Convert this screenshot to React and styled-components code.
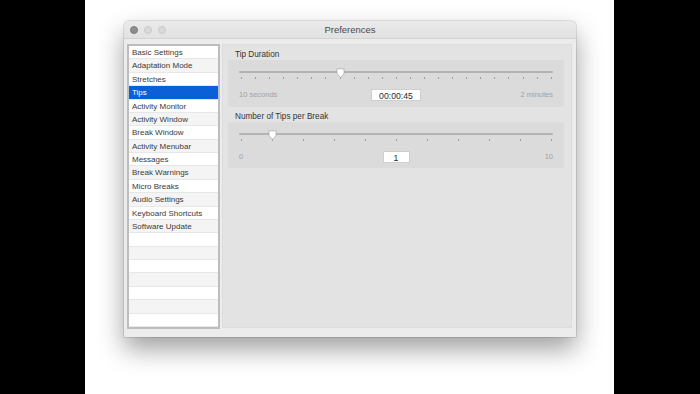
import React from "react";
import styled, { createGlobalStyle } from "styled-components";

const Global = createGlobalStyle`
  html, body {
    margin: 0;
    padding: 0;
    background: #000;
  }
  * {
    box-sizing: border-box;
  }
`;

const Stage = styled.div`
  width: 529px;
  height: 394px;
  margin-left: 85px;
  background: #fff;
  padding: 21px 0 0 39px;
  overflow: hidden;
  font-family: "Liberation Sans", Arial, sans-serif;
`;

const Window = styled.div`
  width: 452px;
  height: 316px;
  background: #ececec;
  border-radius: 5px 5px 1px 1px;
  box-shadow: 0 0 0 1px rgba(0, 0, 0, 0.1), 0 12px 26px rgba(0, 0, 0, 0.38);
  display: flex;
  flex-direction: column;
`;

const TitleBar = styled.div`
  height: 18px;
  display: grid;
  grid-template-columns: 1fr auto 1fr;
  align-items: center;
  background: linear-gradient(#eaeaea, #e2e2e2);
  border-bottom: 1px solid #d2d2d2;
  border-radius: 5px 5px 0 0;
`;

const Lights = styled.div`
  display: flex;
  gap: 6px;
  padding-left: 6px;
`;

const Light = styled.span`
  width: 8px;
  height: 8px;
  border-radius: 50%;
  background: ${(p) => (p.$active ? "#8e8e8e" : "#d9d9d9")};
  border: 0.5px solid ${(p) => (p.$active ? "#7d7d7d" : "#cacaca")};
`;

const Title = styled.div`
  font-size: 9.5px;
  color: #4a4a4a;
`;

const Body = styled.div`
  flex: 1;
  display: flex;
  align-items: flex-start;
  gap: 2px;
  padding: 5px 4px 8px 3px;
`;

const List = styled.div`
  width: 93px;
  height: 285px;
  border: 2px solid #bdbdbd;
  background: #fff;
  display: flex;
  flex-direction: column;
`;

const Row = styled.div`
  height: 13.38px;
  line-height: 13px;
  padding-left: 3px;
  font-size: 8px;
  white-space: nowrap;
  border-bottom: 1px solid #e7e7e7;
  color: ${(p) => (p.$selected ? "#fff" : "#3a3a3a")};
  background: ${(p) =>
    p.$selected ? "#0b5fd7" : p.$odd ? "#f4f4f4" : "#ffffff"};
`;

const Pane = styled.div`
  flex: 1;
  height: 284px;
  background: #e3e3e3;
  border: 1px solid #dddddd;
  padding: 4px 7px 0 5px;
`;

const GroupLabel = styled.div`
  font-size: 8.2px;
  line-height: 11px;
  height: 11px;
  color: #333;
  padding-left: 7px;
  margin-top: ${(p) => (p.$first ? "0" : "4px")};
`;

const SliderBox = styled.div`
  background: #dbdbdb;
  border-radius: 3px;
  padding: 11px 11px ${(p) => p.$bottom}px;
`;

const SliderArea = styled.div`
  position: relative;
`;

const TrackLine = styled.div`
  height: 2px;
  border-radius: 1px;
  background: #b3b3b3;
`;

const Ticks = styled.div`
  display: flex;
  justify-content: space-between;
  margin-top: 4px;
  padding: 0 1px 0 2px;
  height: 2px;
`;

const Tick = styled.span`
  width: 1px;
  height: 2px;
  background: #9c9c9c;
`;

const Thumb = styled.svg`
  position: absolute;
  top: -3px;
  width: 9px;
  height: 10px;
  margin-left: -4.5px;
`;

const LabelRow = styled.div`
  display: flex;
  align-items: center;
  margin-top: 9px;
  height: 13px;
`;

const EdgeLabel = styled.span`
  flex: 1;
  font-size: 7.5px;
  color: #a2a2a2;
  text-align: ${(p) => (p.$right ? "right" : "left")};
`;

const Field = styled.div`
  width: ${(p) => p.$width}px;
  height: 12px;
  line-height: 12px;
  background: #fff;
  border: 0.5px solid #cfcfcf;
  text-align: center;
  font-size: 8.7px;
  color: #2a2a2a;
`;

const items = [
  "Basic Settings",
  "Adaptation Mode",
  "Stretches",
  "Tips",
  "Activity Monitor",
  "Activity Window",
  "Break Window",
  "Activity Menubar",
  "Messages",
  "Break Warnings",
  "Micro Breaks",
  "Audio Settings",
  "Keyboard Shortcuts",
  "Software Update",
];

function Slider({ steps, value, min, max, field, fieldWidth, bottom }) {
  const pct = value / steps;
  return (
    <SliderBox $bottom={bottom}>
      <SliderArea>
        <TrackLine />
        <Ticks>
          {Array.from({ length: steps + 1 }).map((_, i) => (
            <Tick key={i} />
          ))}
        </Ticks>
        <Thumb
          viewBox="0 0 9 10"
          style={{ left: `calc(2.5px + (100% - 4px) * ${pct})` }}
        >
          <path
            d="M1 0.8 H8 V5.8 L4.5 9.2 L1 5.8 Z"
            fill="#fff"
            stroke="#a8a8a8"
            strokeWidth="0.7"
            strokeLinejoin="round"
          />
        </Thumb>
      </SliderArea>
      <LabelRow>
        <EdgeLabel>{min}</EdgeLabel>
        <Field $width={fieldWidth}>{field}</Field>
        <EdgeLabel $right>{max}</EdgeLabel>
      </LabelRow>
    </SliderBox>
  );
}

export default function App() {
  const rows = Array.from({ length: 21 }).map((_, i) => items[i] || "");
  return (
    <Stage>
      <Global />
      <Window>
        <TitleBar>
          <Lights>
            <Light $active />
            <Light />
            <Light />
          </Lights>
          <Title>Preferences</Title>
          <div />
        </TitleBar>
        <Body>
          <List>
            {rows.map((name, i) => (
              <Row key={i} $odd={i % 2 === 1} $selected={name === "Tips"}>
                {name}
              </Row>
            ))}
          </List>
          <Pane>
            <GroupLabel $first>Tip Duration</GroupLabel>
            <Slider
              steps={22}
              value={7}
              min="10 seconds"
              max="2 minutes"
              field="00:00:45"
              fieldWidth={50}
              bottom={6}
            />
            <GroupLabel>Number of Tips per Break</GroupLabel>
            <Slider
              steps={10}
              value={1}
              min="0"
              max="10"
              field="1"
              fieldWidth={27}
              bottom={5}
            />
          </Pane>
        </Body>
      </Window>
    </Stage>
  );
}
